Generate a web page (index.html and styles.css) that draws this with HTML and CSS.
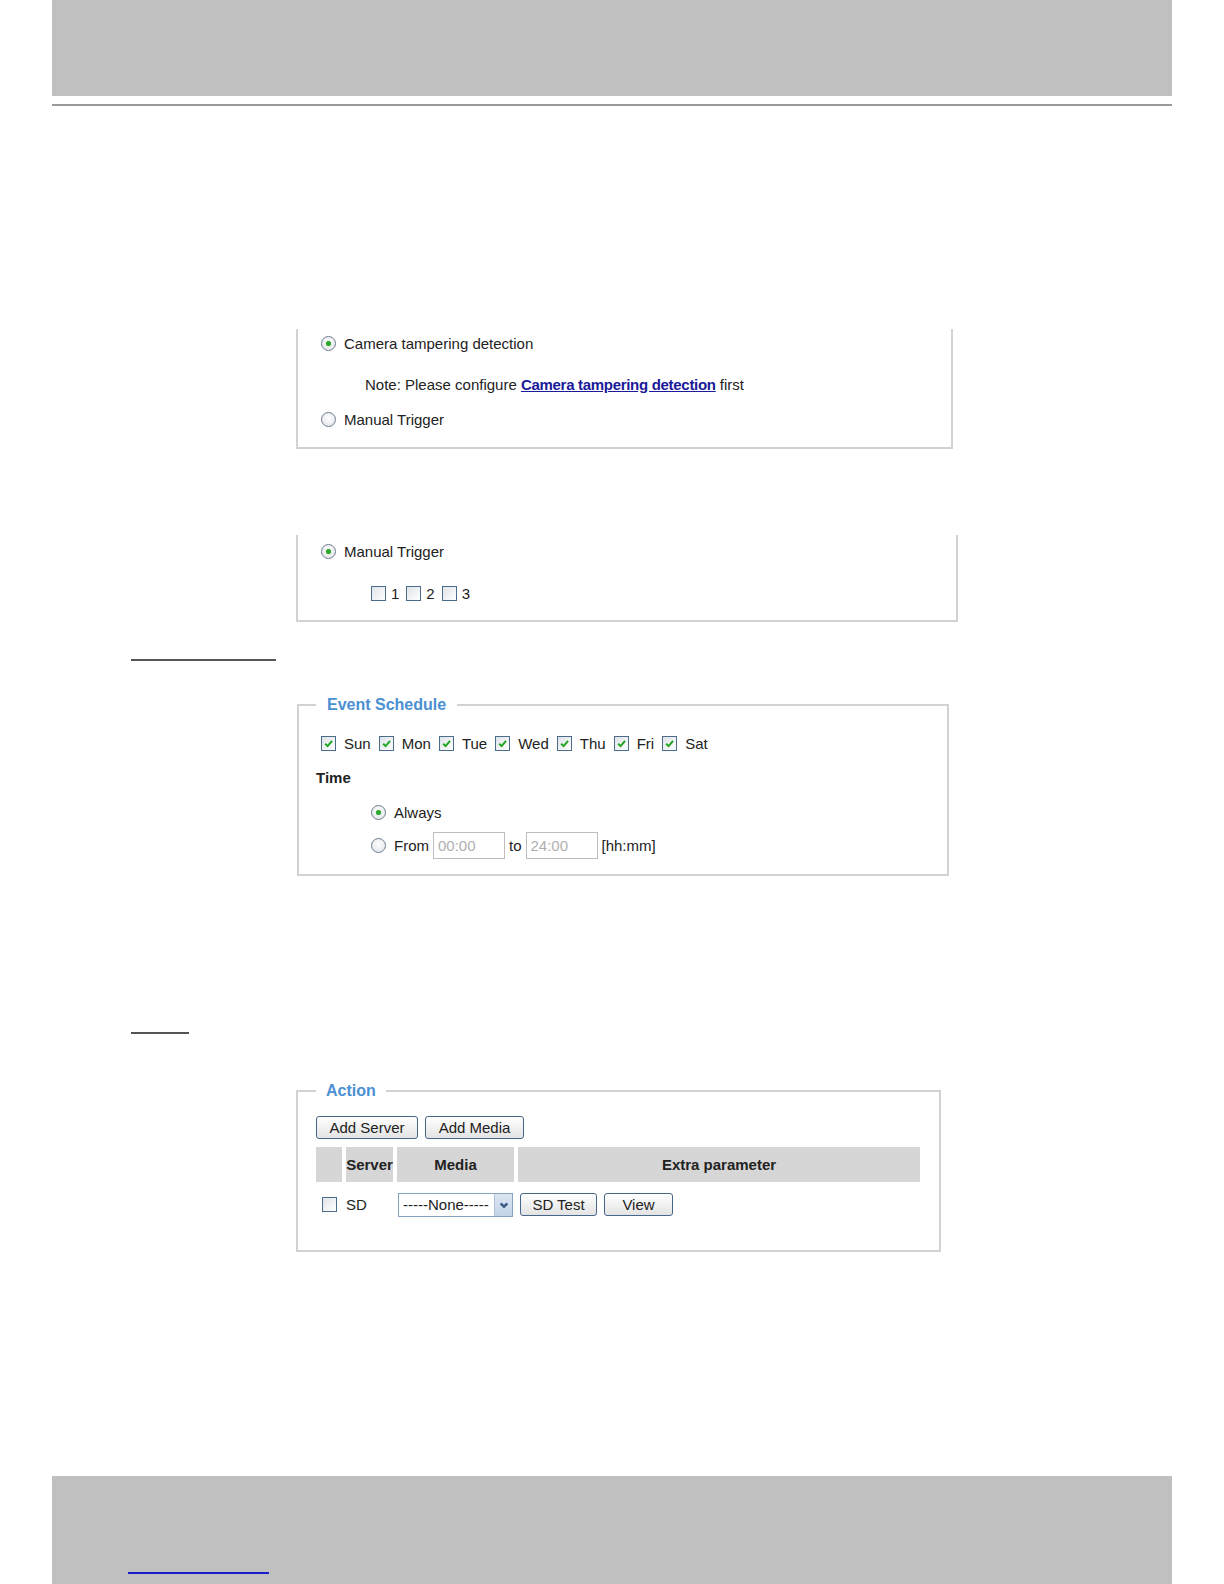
FILE: index.html
```html
<!DOCTYPE html>
<html lang="en">

<head>
    <meta charset="UTF-8">
    <meta name="viewport" content="width=device-width, initial-scale=1.0">
    <title>Event settings</title>
    <link rel="stylesheet" href="styles.css">
</head>

<body>
    <div class="band band-top"></div>
    <div class="rule"></div>

    <div class="panel panel-tamper">
        <div class="row"><span class="radio on"></span><span>Camera tampering detection</span></div>
        <div class="row note">Note: Please configure&nbsp;<a href="#">Camera tampering detection</a>&nbsp;first</div>
        <div class="row row-last"><span class="radio"></span><span>Manual Trigger</span></div>
    </div>

    <div class="panel panel-manual">
        <div class="row"><span class="radio on"></span><span>Manual Trigger</span></div>
        <div class="row triggers">
            <span class="cb"></span><span class="num">1</span>
            <span class="cb"></span><span class="num">2</span>
            <span class="cb"></span><span class="num">3</span>
        </div>
    </div>

    <div class="stub stub-long"></div>

    <fieldset class="group group-schedule">
        <legend>Event Schedule</legend>
        <div class="inner">
            <div class="row days">
                <span class="day"><span class="cb on"><svg viewBox="0 0 10 10"><path d="M2 5.2 L4.2 7.4 L8.2 2.6" /></svg></span>Sun</span>
                <span class="day"><span class="cb on"><svg viewBox="0 0 10 10"><path d="M2 5.2 L4.2 7.4 L8.2 2.6" /></svg></span>Mon</span>
                <span class="day"><span class="cb on"><svg viewBox="0 0 10 10"><path d="M2 5.2 L4.2 7.4 L8.2 2.6" /></svg></span>Tue</span>
                <span class="day"><span class="cb on"><svg viewBox="0 0 10 10"><path d="M2 5.2 L4.2 7.4 L8.2 2.6" /></svg></span>Wed</span>
                <span class="day"><span class="cb on"><svg viewBox="0 0 10 10"><path d="M2 5.2 L4.2 7.4 L8.2 2.6" /></svg></span>Thu</span>
                <span class="day"><span class="cb on"><svg viewBox="0 0 10 10"><path d="M2 5.2 L4.2 7.4 L8.2 2.6" /></svg></span>Fri</span>
                <span class="day"><span class="cb on"><svg viewBox="0 0 10 10"><path d="M2 5.2 L4.2 7.4 L8.2 2.6" /></svg></span>Sat</span>
            </div>
            <div class="row time-title">Time</div>
            <div class="row time-opt always"><span class="radio on"></span><span>Always</span></div>
            <div class="row time-opt from">
                <span class="radio"></span><span>From</span>
                <span class="field">00:00</span>
                <span>to</span>
                <span class="field">24:00</span>
                <span>[hh:mm]</span>
            </div>
        </div>
    </fieldset>

    <div class="stub stub-short"></div>

    <fieldset class="group group-action">
        <legend>Action</legend>
        <div class="inner">
            <div class="buttons">
                <button class="btn btn-server">Add Server</button>
                <button class="btn btn-media">Add Media</button>
            </div>
            <div class="grid">
                <div class="head"></div>
                <div class="head">Server</div>
                <div class="head">Media</div>
                <div class="head">Extra parameter</div>

                <div class="cell cell-check"><span class="cb"></span></div>
                <div class="cell">SD</div>
                <div class="cell">
                    <span class="select">-----None-----<span class="arrow"><svg viewBox="0 0 10 10"><path d="M2.2 3.6 L5 6.4 L7.8 3.6" /></svg></span></span>
                </div>
                <div class="cell cell-btns">
                    <button class="btn btn-test">SD Test</button>
                    <button class="btn btn-view">View</button>
                </div>
            </div>
        </div>
    </fieldset>

    <div class="band band-bottom"><span class="foot-link"></span></div>
</body>

</html>
```

FILE: styles.css
```css
body {
    margin: 0;
    font-family: "Liberation Sans", Arial, sans-serif;
    font-size: 15px;
    color: #222;
    background: #fff;
}

.band {
    margin: 0 52px;
    background-color: #c0c0c0;
}

.band-top {
    height: 96px;
}

.rule {
    margin: 8px 52px 0;
    height: 2px;
    background-color: #999;
}

/* cropped panels: no top border */
.panel {
    box-sizing: border-box;
    margin-left: 296px;
    border: 2px solid #d2d2d2;
    border-top: none;
    padding-left: 23px;
}

.panel-tamper {
    width: 657px;
    margin-top: 223px;
    padding-top: 4px;
    padding-bottom: 18px;
}

.panel-manual {
    width: 662px;
    margin-top: 86px;
    padding-top: 6px;
    padding-bottom: 17px;
}

.row {
    display: flex;
    align-items: center;
    height: 20px;
    white-space: nowrap;
}

.row .radio {
    margin-right: 8px;
}

.note {
    margin-top: 21px;
    padding-left: 44px;
}

.note a {
    color: #1a1a9a;
    font-weight: bold;
    letter-spacing: -0.3px;
}

.row-last {
    margin-top: 15px;
}

.triggers {
    margin-top: 22px;
    padding-left: 50px;
}

.triggers .num {
    margin: 0 7px 0 5px;
}

.radio {
    box-sizing: border-box;
    width: 15px;
    height: 15px;
    border: 1px solid #6f7e8e;
    border-radius: 50%;
    background: radial-gradient(circle at 50% 40%, #ffffff, #dde2e7);
    display: inline-flex;
    align-items: center;
    justify-content: center;
    flex-shrink: 0;
}

.radio.on::after {
    content: "";
    width: 5px;
    height: 5px;
    border-radius: 50%;
    background: #2fa52f;
    box-shadow: 0 0 1px #7c7;
}

.cb {
    box-sizing: border-box;
    width: 15px;
    height: 15px;
    border: 1px solid #4c6c8c;
    background: linear-gradient(135deg, #dfe3e8, #ffffff);
    display: inline-flex;
    align-items: center;
    justify-content: center;
    flex-shrink: 0;
}

.cb svg {
    width: 11px;
    height: 11px;
    fill: none;
    stroke: #21a621;
    stroke-width: 1.8;
}

.stub {
    height: 2px;
    margin-left: 131px;
    background-color: #555;
}

.stub-long {
    width: 145px;
    margin-top: 37px;
}

.stub-short {
    width: 58px;
    margin-top: 156px;
}

.group {
    box-sizing: border-box;
    margin: 0;
    padding: 0;
    border: 2px solid #d2d2d2;
    min-inline-size: 0;
}

.group legend {
    font-size: 16px;
    line-height: 20px;
    font-weight: bold;
    color: #4a90d2;
}

.group-schedule {
    width: 652px;
    margin: 34px 0 0 297px;
}

.group-schedule legend {
    margin-left: 17px;
    padding: 0 11px;
}

.group-schedule .inner {
    padding: 18px 0 15px 17px;
}

.days {
    padding-left: 5px;
}

.day {
    display: inline-flex;
    align-items: center;
    gap: 8px;
    margin-right: 8px;
}

.time-title {
    margin-top: 14px;
    font-weight: bold;
}

.time-opt {
    padding-left: 55px;
}

.time-opt .radio {
    margin-right: 8px;
}

.always {
    margin-top: 15px;
}

.from {
    margin-top: 10px;
    height: 27px;
    gap: 4px;
}

.from .radio {
    margin-right: 4px;
}

.field {
    box-sizing: border-box;
    width: 72px;
    height: 27px;
    border: 1px solid #bdbdbd;
    color: #b0b0b0;
    padding: 0 4px;
    line-height: 25px;
}

.group-action {
    width: 645px;
    margin: 47px 0 0 296px;
}

.group-action legend {
    margin-left: 18px;
    padding: 0 10px;
}

.group-action .inner {
    padding: 15px 0 33px 18px;
}

.buttons {
    display: flex;
    gap: 7px;
}

.btn {
    box-sizing: border-box;
    height: 23px;
    padding: 0;
    font-family: inherit;
    font-size: 15px;
    color: #222;
    border: 1px solid #47678a;
    border-radius: 3px;
    background: linear-gradient(#ffffff, #e3e3e3);
}

.btn-server {
    width: 102px;
}

.btn-media {
    width: 99px;
}

.btn-test {
    width: 77px;
}

.btn-view {
    width: 69px;
}

.grid {
    display: grid;
    grid-template-columns: 26px 47px 117px 402px;
    column-gap: 4px;
    margin-top: 8px;
}

.head {
    height: 35px;
    background-color: #d6d6d6;
    font-weight: bold;
    display: flex;
    align-items: center;
    justify-content: center;
}

.cell {
    margin-top: 10px;
    height: 25px;
    display: flex;
    align-items: center;
}

.cell-check {
    justify-content: center;
}

.cell-btns {
    gap: 7px;
    padding-left: 2px;
}

.select {
    box-sizing: border-box;
    width: 115px;
    height: 24px;
    margin-left: 1px;
    border: 1px solid #87a3c3;
    padding-left: 4px;
    display: flex;
    align-items: center;
    justify-content: space-between;
    background: #fff;
}

.arrow {
    box-sizing: border-box;
    width: 18px;
    height: 22px;
    background: linear-gradient(#dce6f2, #c3d3e8);
    border-left: 1px solid #b0c2d8;
    display: flex;
    align-items: center;
    justify-content: center;
}

.arrow svg {
    width: 12px;
    height: 12px;
    fill: none;
    stroke: #3b5b87;
    stroke-width: 2;
}

.band-bottom {
    height: 108px;
    margin-top: 224px;
    padding: 96px 0 0 76px;
    box-sizing: border-box;
}

.foot-link {
    display: block;
    width: 141px;
    height: 2px;
    background-color: #1c1cc8;
}
```
